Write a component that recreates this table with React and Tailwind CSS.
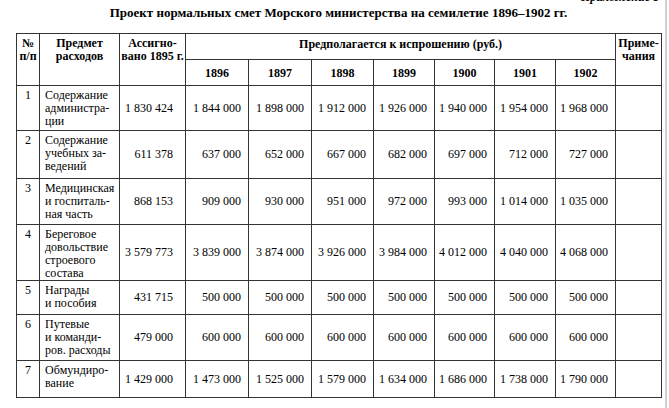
import React from "react";

const years = ["1896", "1897", "1898", "1899", "1900", "1901", "1902"];

const rows = [
  { n: "1", name: ["Содержание", "администра-", "ции"], a: "1 830 424", v: ["1 844 000", "1 898 000", "1 912 000", "1 926 000", "1 940 000", "1 954 000", "1 968 000"], h: 45 },
  { n: "2", name: ["Содержание", "учебных за-", "ведений"], a: "611 378", v: ["637 000", "652 000", "667 000", "682 000", "697 000", "712 000", "727 000"], h: 48 },
  { n: "3", name: ["Медицинская", "и госпиталь-", "ная часть"], a: "868 153", v: ["909 000", "930 000", "951 000", "972 000", "993 000", "1 014 000", "1 035 000"], h: 46 },
  { n: "4", name: ["Береговое", "довольствие", "строевого", "состава"], a: "3 579 773", v: ["3 839 000", "3 874 000", "3 926 000", "3 984 000", "4 012 000", "4 040 000", "4 068 000"], h: 56 },
  { n: "5", name: ["Награды", "и пособия"], a: "431 715", v: ["500 000", "500 000", "500 000", "500 000", "500 000", "500 000", "500 000"], h: 34 },
  { n: "6", name: ["Путевые", "и команди-", "ров. расходы"], a: "479 000", v: ["600 000", "600 000", "600 000", "600 000", "600 000", "600 000", "600 000"], h: 46 },
  { n: "7", name: ["Обмундиро-", "вание"], a: "1 429 000", v: ["1 473 000", "1 525 000", "1 579 000", "1 634 000", "1 686 000", "1 738 000", "1 790 000"], h: 37 },
];

const widths = [23, 80, 66, 63, 63, 62, 61, 60, 61, 60, 46];

const serif = "font-['Liberation_Serif','Times_New_Roman',serif]";

export default function App() {
  const bd = `border border-[#333333] ${serif}`;
  return (
    <div className={`flex bg-white w-[669px] h-[408px] overflow-hidden ${serif}`}>
      <div className="w-[667px] h-[408px] border-r-2 border-[#d0d0d0] shrink-0">
        <div className="pl-[16px] w-[661px] text-black">
          <div className="h-[4px] overflow-hidden text-right pr-[2px]">
            <div className="-mt-[10px] text-[12px] leading-[14px] font-bold italic">Приложение 1</div>
          </div>
          <div className="text-center font-bold text-[13px] leading-[16px] mt-[1px]">
            Проект нормальных смет Морского министерства на семилетие 1896–1902 гг.
          </div>
          <table className={`mt-[12px] w-[645px] table-fixed border-collapse border border-[#2a2a2a] text-[12px] ${serif}`}>
            <colgroup>
              {widths.map((w, i) => (
                <col key={i} style={{ width: w }} />
              ))}
            </colgroup>
            <thead>
              <tr className="h-[26px] font-bold leading-[13px]">
                <th rowSpan={2} className={`${bd} align-top text-center pt-[3px] px-0 font-bold`}>№<br />п/п</th>
                <th rowSpan={2} className={`${bd} align-top text-center pt-[3px] px-0 font-bold`}>Предмет<br />расходов</th>
                <th rowSpan={2} className={`${bd} align-top text-center pt-[3px] px-0 font-bold`}>Ассигно-<br />вано 1895 г.</th>
                <th colSpan={7} className={`${bd} align-top text-center pt-[4px] font-bold`}>Предполагается к испрошению (руб.)</th>
                <th rowSpan={2} className={`${bd} align-top text-center pt-[3px] px-0 font-bold`}>Приме-<br />чания</th>
              </tr>
              <tr className="h-[26px]">
                {years.map((y) => (
                  <th key={y} className={`${bd} align-middle text-center font-bold`}>{y}</th>
                ))}
              </tr>
            </thead>
            <tbody>
              {rows.map((r) => (
                <tr key={r.n} style={{ height: r.h }} className="leading-[13px]">
                  <td className={`${bd} align-top text-center pt-[3px]`}>{r.n}</td>
                  <td className={`${bd} align-top text-left pl-[5px] pt-[3px]`}>
                    {r.name.map((l, i) => (
                      <div key={i}>{l}</div>
                    ))}
                  </td>
                  <td className={`${bd} align-middle text-right pr-[12px] whitespace-nowrap`}>{r.a}</td>
                  {r.v.map((v, i) => (
                    <td key={i} className={`${bd} align-middle text-right pr-[7px] whitespace-nowrap`}>{v}</td>
                  ))}
                  <td className={bd}></td>
                </tr>
              ))}
            </tbody>
          </table>
        </div>
      </div>
    </div>
  );
}
